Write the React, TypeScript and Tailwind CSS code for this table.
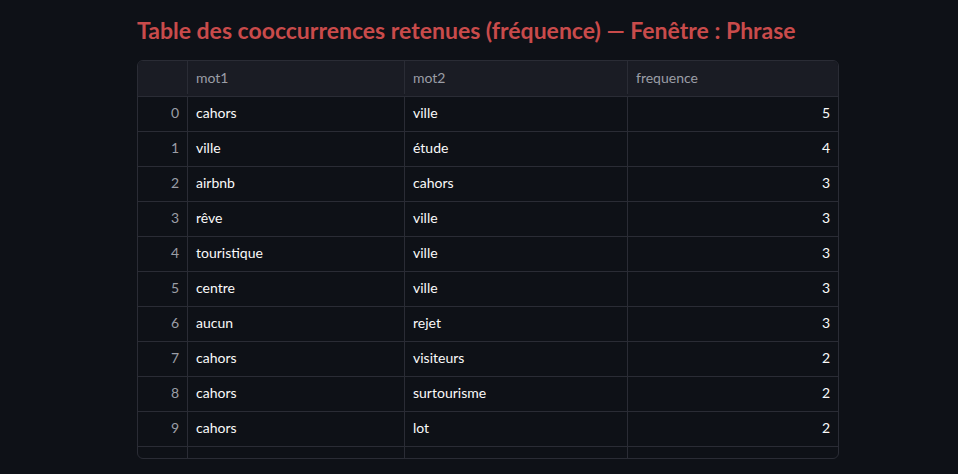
const ROWS: [number, string, string, number][] = [
  [0, "cahors", "ville", 5],
  [1, "ville", "étude", 4],
  [2, "airbnb", "cahors", 3],
  [3, "rêve", "ville", 3],
  [4, "touristique", "ville", 3],
  [5, "centre", "ville", 3],
  [6, "aucun", "rejet", 3],
  [7, "cahors", "visiteurs", 2],
  [8, "cahors", "surtourisme", 2],
  [9, "cahors", "lot", 2],
  [10, "cahors", "étude", 2],
];

const COLS = "grid grid-cols-[50px_217px_223px_1fr]";

export default function App() {
  return (
    <div className="h-[474px] w-[958px] overflow-hidden bg-[#0e1117] font-['Lato',sans-serif]">
      <div className="ml-[137px] w-[702px] pt-[14px]">
        <h2 className="text-[23px] font-bold leading-[32px] text-[#c94b4b]">
          Table des cooccurrences retenues (fréquence) — Fenêtre : Phrase
        </h2>
        <div className="mt-[14px] h-[399px] overflow-hidden rounded-md border border-[#2a2c35] text-[14px]">
          <div className={`${COLS} h-[36px] border-b border-[#2a2c35] bg-[#1a1c24] pb-[2px] text-[#9b9ea6]`}>
            <div className="border-r border-[#2a2c35]" />
            <div className="flex items-center border-r border-[#2a2c35] px-2">mot1</div>
            <div className="flex items-center border-r border-[#2a2c35] px-2">mot2</div>
            <div className="flex items-center px-2">frequence</div>
          </div>
          {ROWS.map(([i, a, b, f]) => (
            <div key={i} className={`${COLS} h-[35px] border-b border-[#2a2c35] text-[#fafafa]`}>
              <div className="flex items-center justify-end border-r border-[#2a2c35] px-2 pb-[3px] text-[#9b9ea6]">{i}</div>
              <div className="flex items-center border-r border-[#2a2c35] px-2 pb-[3px]">{a}</div>
              <div className="flex items-center border-r border-[#2a2c35] px-2 pb-[3px]">{b}</div>
              <div className="flex items-center justify-end px-2 pb-[3px]">{f}</div>
            </div>
          ))}
        </div>
      </div>
    </div>
  );
}
